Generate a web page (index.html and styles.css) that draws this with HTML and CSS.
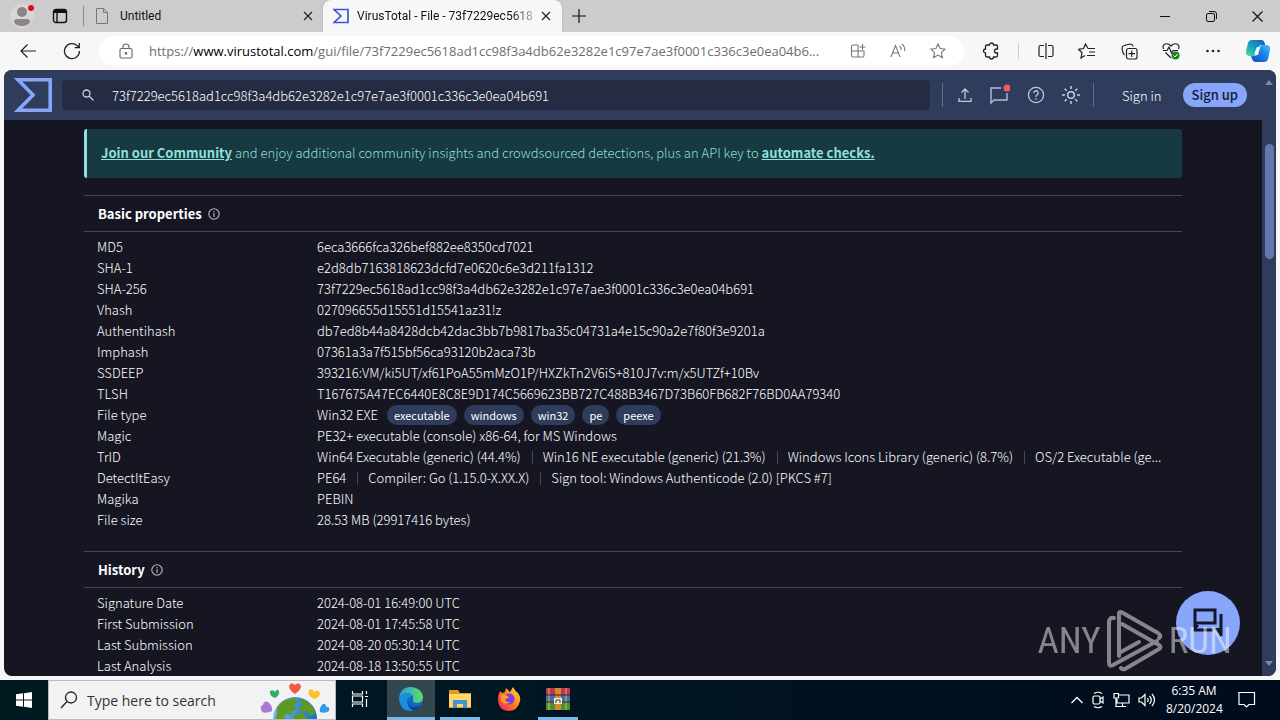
FILE: index.html
```html
<!DOCTYPE html>
<html lang="en">
<head>
<meta charset="utf-8">
<title>VirusTotal - File</title>
<link rel="stylesheet" href="styles.css">
</head>
<body>
<div class="desktop">
  <div class="tabstrip">
    <button class="plain profile" aria-label="Profile"><svg width="24" height="24" viewBox="0 0 24 24"><circle cx="12" cy="12" r="12" fill="#d8d6d5"/><circle cx="12" cy="8" r="5" fill="#8b8684"/><path d="M4 18q0-3 3-3h10q3 0 3 3-2 4-8 4t-8-4z" fill="#8b8684"/><circle cx="21" cy="4" r="3" fill="#e00b1c"/></svg></button>
    <button class="plain workspaces" aria-label="Tab actions"><svg width="16" height="16" viewBox="0 0 16 16" fill="none" stroke="#111" stroke-width="1.4"><rect x="1.5" y="1.5" width="13" height="13" rx="2.5"/><path d="M2 3.5h12" stroke-width="3"/><path d="M5 4v10"/></svg></button>
    <span class="tab-rule"></span>
    <div class="tab">
      <svg width="16" height="18" viewBox="0 0 16 18" fill="none" stroke="#777"><path d="M2.500 1.500h7l4 4v11h-11zM9.500 1.500v4h4"/></svg>
      <span class="tab-title">Untitled</span>
      <button class="plain" aria-label="Close Untitled"><svg width="10" height="10" viewBox="0 0 10 10" stroke="#222" stroke-width="1.200"><path d="M1 1l8 8M9 1l-8 8"/></svg></button>
    </div>
    <div class="tab active">
      <svg width="16" height="16" viewBox="0 0 16 16" fill="none" stroke="#3a55d9" stroke-width="1.700"><path d="M1 1.500h14v13H1L8 8z"/></svg>
      <span class="tab-title fade">VirusTotal - File - 73f7229ec5618a</span>
      <button class="plain" aria-label="Close VirusTotal"><svg width="10" height="10" viewBox="0 0 10 10" stroke="#222" stroke-width="1.200"><path d="M1 1l8 8M9 1l-8 8"/></svg></button>
    </div>
    <button class="plain new-tab" aria-label="New tab"><svg width="14" height="14" viewBox="0 0 14 14" stroke="#111" stroke-width="1.200"><path d="M7 0v14M0 7h14"/></svg></button>
    <div class="window-controls">
      <button class="plain" aria-label="Minimize"><svg width="11" height="11" viewBox="0 0 11 11" stroke="#111"><path d="M0 5.500h10"/></svg></button>
      <button class="plain" aria-label="Restore"><svg width="11" height="11" viewBox="0 0 11 11" fill="none" stroke="#111"><rect x=".5" y="2.500" width="8" height="8" rx="1.500"/><path d="M3 .5h5q2.500 0 2.500 2.500v5"/></svg></button>
      <button class="plain" aria-label="Close"><svg width="11" height="11" viewBox="0 0 11 11" stroke="#111" stroke-width="1.200"><path d="M.5.5l10 10M10.500.5l-10 10"/></svg></button>
    </div>
  </div>

  <div class="toolbar">
    <button class="plain back" aria-label="Back"><svg width="16" height="14" viewBox="0 0 16 14" fill="none" stroke="#222" stroke-width="1.200"><path d="M16 7H1M7.500.500L1 7l6.500 6.500"/></svg></button>
    <button class="plain reload" aria-label="Reload"><svg width="18" height="18" viewBox="0 0 18 18" fill="none" stroke="#222" stroke-width="1.300"><path d="M16.500 9A7.500 7.500 0 1 1 14 3.500L16 5.500M16.300 1v4.700h-4.700"/></svg></button>
    <div class="address">
      <svg width="14" height="16" viewBox="0 0 14 16" fill="none" stroke="#666" stroke-width="1.100"><rect x="1" y="5.500" width="12" height="9.500" rx="1.500"/><path d="M4 5.500V4a3 3 0 0 1 6 0v1.500"/><circle cx="7" cy="10.300" r=".8" fill="#666"/></svg>
      <div class="url">https://<b>www.virustotal.com</b>/gui/file/73f7229ec5618ad1cc98f3a4db62e3282e1c97e7ae3f0001c336c3e0ea04b6...</div>
      <button class="plain" aria-label="Add app"><svg width="16" height="16" viewBox="0 0 16 16" fill="none" stroke="#777" stroke-width="1.100"><path d="M8 2H3Q1.500 2 1.500 3.500v9Q1.500 14 3 14h9.500q1.500 0 1.500-1.500V8H1.500M8 2v12M12.500 1v6M9.500 4h6"/></svg></button>
      <button class="plain" aria-label="Read aloud"><svg width="16" height="16" viewBox="0 0 16 16" fill="none" stroke="#777" stroke-width="1.100"><path d="M1 14L5.500 2.500 10 14M2.500 10h6M9.500 3q2 1.500 1.500 4M12 1q3.500 3 2.500 7"/></svg></button>
      <button class="plain" aria-label="Favorite"><svg width="16" height="16" viewBox="0 0 16 16" fill="none" stroke="#777" stroke-width="1.100"><path d="M8 1l2.100 4.600 5 .6-3.700 3.400 1 5L8 12.100l-4.400 2.500 1-5L.9 6.200l5-.6z"/></svg></button>
    </div>
    <div class="tools">
      <button class="plain" aria-label="Extensions"><svg width="18" height="18" viewBox="0 0 18 18" fill="none" stroke="#222" stroke-width="1.300"><path d="M5 3h2.500a2 2 0 0 1 4 0H14q1.500 0 1.500 1.500V7h-1a2 2 0 0 0 0 4h1v2.500q0 1.500-1.500 1.500h-2.500a2 2 0 0 1-4 0H5q-1.500 0-1.500-1.500V11a2 2 0 0 1 0-4V4.500Q3.500 3 5 3z"/></svg></button>
      <span class="tool-rule"></span>
      <button class="plain" aria-label="Split screen"><svg width="16" height="16" viewBox="0 0 16 16" fill="none" stroke="#222" stroke-width="1.200"><path d="M6 2.500H2.500Q1 2.500 1 4v8q0 1.500 1.500 1.500H6M10 2.500h3.500Q15 2.500 15 4v8q0 1.500-1.500 1.500H10M8 0v16"/></svg></button>
      <button class="plain" aria-label="Favorites"><svg width="18" height="16" viewBox="0 0 18 16" fill="none" stroke="#222" stroke-width="1.200"><path d="M10 5.500L7.500 1 5.500 5.500l-5 .8L4 9.700 3 15l4-2.500M10 5.500h7M11 9h6M9 12.500h8"/></svg></button>
      <button class="plain" aria-label="Collections"><svg width="17" height="17" viewBox="0 0 17 17" fill="none" stroke="#222" stroke-width="1.200"><rect x="5.500" y="5.500" width="10.500" height="10.500" rx="2"/><path d="M10.700 7.500v6.500M7.500 10.700H14M3.500 12Q1.500 10 1 5.500 1 3 3 2.500l6-1.500q2.500 0 3 2.500"/></svg></button>
      <button class="plain" aria-label="Browser essentials"><svg width="18" height="18" viewBox="0 0 18 18" fill="none" stroke="#222" stroke-width="1.200"><path d="M1.500 7Q0 3.500 3 2q3.500-1 6 2 2.500-3 6-2 3 1.500 1.500 5M3.500 10.500L9 16M1 8.500h4l2-3.500 2.500 6L11 8.500h5"/><circle cx="13.500" cy="13.500" r="4" fill="#168525" stroke="none"/><path d="M11.500 13.500l1.500 1.500 2.500-3" stroke="#fff" stroke-width="1"/></svg></button>
      <button class="plain" aria-label="Settings and more"><svg width="16" height="16" viewBox="0 0 16 16" fill="#222"><circle cx="2.500" cy="8" r="1.300"/><circle cx="8" cy="8" r="1.300"/><circle cx="13.500" cy="8" r="1.300"/></svg></button>
      <button class="plain" aria-label="Copilot"><svg width="26" height="26" viewBox="0 0 26 26"><defs><linearGradient id="c1" x1="0" y1="1" x2="1" y2="0"><stop offset="0" stop-color="#4fe08d"/><stop offset=".45" stop-color="#12a5c0"/><stop offset="1" stop-color="#1557c9"/></linearGradient><linearGradient id="c2" x1="0" y1="1" x2="1" y2="0"><stop offset="0" stop-color="#1549c5"/><stop offset=".6" stop-color="#1b86ee"/><stop offset="1" stop-color="#4fc1ff"/></linearGradient></defs><path d="M7 2h9q3 0 3.700 3l.5 2h-4q-2 0-2.700 3l-2 6q-.7 2-3 2H4q-4-1-3-5l2-8q1-3 4-3z" fill="url(#c1)"/><path d="M19 24h-9q-2 0-3-3l-1-3h3q3 0 4-3l2-6q.7-2 3-2h4q4 1 3 5l-2 9q-1 3-4 3z" fill="url(#c2)"/><path d="M12 9h3l-2 8h-2q-2 0-1.500-2z" fill="#f5fbff"/></svg></button>
    </div>
  </div>

  <div class="viewport">
    <div class="site">
      <header class="site-header">
        <a class="brand" href="#" aria-label="VirusTotal"><svg width="38" height="34" viewBox="0 0 38 34" fill="none" stroke="#87a6fa" stroke-width="3.600"><path d="M4 1.800h32.200v30.400H4L19 17z"/></svg></a>
        <div class="search">
          <svg width="12" height="12" viewBox="0 0 12 12" fill="none" stroke="#ccd1df" stroke-width="1.300"><circle cx="4.500" cy="4.500" r="3.500"/><path d="M7 7l4.500 4.500"/></svg>
          <input type="text" aria-label="Search" value="73f7229ec5618ad1cc98f3a4db62e3282e1c97e7ae3f0001c336c3e0ea04b691">
        </div>
        <div class="site-actions">
          <button class="plain" aria-label="Upload"><svg width="14" height="14" viewBox="0 0 14 14" fill="none" stroke="#c0c8dd" stroke-width="1.300"><path d="M7 11V1M3.500 4.500L7 1l3.500 3.500M1 10v3.300h12V10"/></svg></button>
          <button class="plain" aria-label="Notifications"><svg width="22" height="22" viewBox="0 0 22 22" fill="none" stroke="#b4bed8" stroke-width="1.400"><path d="M13 4H3v15l3-3h13V9"/><circle cx="19" cy="4" r="3.500" fill="#f25c58" stroke="none"/></svg></button>
          <button class="plain" aria-label="Help"><svg width="18" height="18" viewBox="0 0 18 18" fill="none" stroke="#c0c8dd" stroke-width="1.300"><circle cx="9" cy="9" r="7.600"/><path d="M6.800 7a2.200 2.200 0 1 1 3.300 1.900Q9 9.500 9 11M9 12.300v1.400"/></svg></button>
          <button class="plain" aria-label="Theme"><svg width="20" height="20" viewBox="0 0 20 20" fill="none" stroke="#c8cfe0" stroke-width="1.500"><circle cx="10" cy="10" r="3.300"/><path d="M10 1v3M10 16v3M1 10h3M16 10h3M3.700 3.700l2 2M14.300 14.300l2 2M16.300 3.700l-2 2M5.700 14.300l-2 2"/></svg></button>
        </div>
        <a class="sign-in" href="#">Sign in</a>
        <a class="sign-up" href="#">Sign up</a>
      </header>
      <main class="content">
        <div class="callout"><a href="#">Join our Community</a> and enjoy additional community insights and crowdsourced detections, plus an API key to <a href="#">automate checks.</a></div>
        <section class="card">
          <h2>Basic properties <svg width="12" height="12" viewBox="0 0 12 12" fill="none" stroke="#b9bac5" stroke-width="1.100"><circle cx="6" cy="6" r="5.200"/><path d="M6 5v4M6 3v1.200"/></svg></h2>
          <table>
            <tr><th scope="row">MD5</th><td>6eca3666fca326bef882ee8350cd7021</td></tr>
            <tr><th scope="row">SHA-1</th><td>e2d8db7163818623dcfd7e0620c6e3d211fa1312</td></tr>
            <tr><th scope="row">SHA-256</th><td>73f7229ec5618ad1cc98f3a4db62e3282e1c97e7ae3f0001c336c3e0ea04b691</td></tr>
            <tr><th scope="row">Vhash</th><td>027096655d15551d15541az31!z</td></tr>
            <tr><th scope="row">Authentihash</th><td>db7ed8b44a8428dcb42dac3bb7b9817ba35c04731a4e15c90a2e7f80f3e9201a</td></tr>
            <tr><th scope="row">Imphash</th><td>07361a3a7f515bf56ca93120b2aca73b</td></tr>
            <tr><th scope="row">SSDEEP</th><td>393216:VM/ki5UT/xf61PoA55mMzO1P/HXZkTn2V6iS+810J7v:m/x5UTZf+10Bv</td></tr>
            <tr><th scope="row">TLSH</th><td>T167675A47EC6440E8C8E9D174C5669623BB727C488B3467D73B60FB682F76BD0AA79340</td></tr>
            <tr><th scope="row">File type</th><td><div class="types"><span>Win32 EXE</span><a class="chip" href="#">executable</a><a class="chip" href="#">windows</a><a class="chip" href="#">win32</a><a class="chip" href="#">pe</a><a class="chip" href="#">peexe</a></div></td></tr>
            <tr><th scope="row">Magic</th><td>PE32+ executable (console) x86-64, for MS Windows</td></tr>
            <tr><th scope="row">TrID</th><td><div class="parts"><span>Win64 Executable (generic) (44.4%)</span><span>Win16 NE executable (generic) (21.3%)</span><span>Windows Icons Library (generic) (8.7%)</span><span>OS/2 Executable (ge...</span></div></td></tr>
            <tr><th scope="row">DetectItEasy</th><td><div class="parts"><span>PE64</span><span>Compiler: Go (1.15.0-X.XX.X)</span><span>Sign tool: Windows Authenticode (2.0) [PKCS #7]</span></div></td></tr>
            <tr><th scope="row">Magika</th><td>PEBIN</td></tr>
            <tr><th scope="row">File size</th><td>28.53 MB (29917416 bytes)</td></tr>
          </table>
        </section>
        <section class="card">
          <h2>History <svg width="12" height="12" viewBox="0 0 12 12" fill="none" stroke="#b9bac5" stroke-width="1.100"><circle cx="6" cy="6" r="5.200"/><path d="M6 5v4M6 3v1.200"/></svg></h2>
          <table>
            <tr><th scope="row">Signature Date</th><td>2024-08-01 16:49:00 UTC</td></tr>
            <tr><th scope="row">First Submission</th><td>2024-08-01 17:45:58 UTC</td></tr>
            <tr><th scope="row">Last Submission</th><td>2024-08-20 05:30:14 UTC</td></tr>
            <tr><th scope="row">Last Analysis</th><td>2024-08-18 13:50:55 UTC</td></tr>
          </table>
        </section>
      </main>
    </div>
    <div class="scrollbar">
      <svg width="8" height="5" viewBox="0 0 8 5" fill="#7c89ab"><path d="M0 5l4-5 4 5z"/></svg>
      <div class="track"><div class="thumb"></div></div>
      <svg width="8" height="5" viewBox="0 0 8 5" fill="#7c89ab"><path d="M0 0l4 5 4-5z"/></svg>
    </div>
    <button class="chat" aria-label="Contact"><svg width="32" height="32" viewBox="0 0 32 32" fill="none" stroke="#15172a" stroke-width="3"><path d="M3 3h20v13H3zM3 14v9h18M29 7v22"/><path d="M3 16v7l4-4zM22 21h7v9z" fill="#15172a" stroke="none"/></svg></button>
    <div class="watermark">
      <span>ANY</span>
      <svg width="56" height="62" viewBox="0 0 56 62" fill="none" stroke="#fff" stroke-width="4" stroke-linejoin="round" stroke-linecap="round"><path d="M7 8Q2 7 2 13v40q0 4 4 2L50 31"/><path d="M12 46V3q1-2 4 0l35 20q4 3 1 5"/><path d="M15 14l37 21q3 2 0 4L18 59q-3 1-4-1"/><path d="M12 43l20-11"/></svg>
      <span>RUN</span>
    </div>
  </div>

  <footer class="taskbar">
    <button class="plain start" aria-label="Start"><svg width="16" height="16" viewBox="0 0 16 16" fill="#fff"><path d="M0 2.300L7 1.300V7.500H0zM8 1.200L16 0v7.500H8zM0 8.500h7v6.200L0 13.700zM8 8.500h8V16L8 14.800z"/></svg></button>
    <div class="task-search">
      <svg width="18" height="18" viewBox="0 0 18 18" fill="none" stroke="#222" stroke-width="1.300"><circle cx="11" cy="6.500" r="5.500"/><path d="M7 10.500L1 17"/></svg>
      <input type="text" aria-label="Taskbar search" placeholder="Type here to search">
      <svg class="globe" width="72" height="38" viewBox="0 0 72 38"><defs><linearGradient id="g1"><stop offset="0" stop-color="#79b4f5"/><stop offset="1" stop-color="#176fca"/></linearGradient></defs><circle cx="36" cy="38" r="22" fill="url(#g1)"/><path d="M18 27q6-10 18-10l3 4-4 4 3 3-5 2-1 4-5-1-3 3 4 2H16q3-5 2-9zM43 18q11 4 13 14l-4 3-6-5-3 2-3-5 4-3-3-3zM37 32l8 1 3 5H34z" fill="#5c9b20"/><path d="M36 13q-6-4-6-8 2-5 6-1 4-4 6 1 0 4-6 8z" fill="#f15b43"/><path d="M16 17q-6-2-5-7 3-2 5 1 2-4 4-1 1 4-4 7z" fill="#2fae67"/><path d="M55 18q-7-3-5-9 4-2 5 2 4-3 6 1 0 4-6 6z" fill="#ffc127"/><path d="M3 31q-3-6 1-7 1-5 5-3 5 4 4 9-5 3-10 1z" fill="#a77bd6"/><path d="M61 31q-1-5 3-8 3-1 3 3 4-1 3 4-4 3-9 1z" fill="#2b9ce8"/></svg>
    </div>
    <div class="apps">
      <button class="plain app" aria-label="Task view"><svg width="18" height="18" viewBox="0 0 18 18" fill="none" stroke="#fff" stroke-width="1.200"><path d="M1.500 1v3h10V1M1.500 17v-3h10v3M1.500 6h10v6h-10zM15.500 1v3M15.500 9v8M14 6.500h3" /></svg></button>
      <button class="plain app current" aria-label="Microsoft Edge"><svg width="26" height="26" viewBox="0 0 26 26"><defs><linearGradient id="e1"><stop offset="0" stop-color="#249fd8"/><stop offset="1" stop-color="#62dc62"/></linearGradient></defs><circle cx="13" cy="13" r="12" fill="#1168bf"/><path d="M1 13Q2 1 13 1q11 1 12 10 0 6-7 6-4-1-3-4 1-5-5-6-7 0-9 6z" fill="url(#e1)"/><path d="M1 13q2-6 8-6 4 0 6 3-6 0-6 6 1 6 8 8-14 4-16-11z" fill="#1b8fdd"/><path d="M10 15q0 6 6 6 4 0 7-2-3 5-7 6-7-3-6-10z" fill="#0b438c"/></svg></button>
      <button class="plain app open" aria-label="File Explorer"><svg width="24" height="22" viewBox="0 0 24 22"><path d="M1 2h9l2 3h11v15H1z" fill="#e49a1c"/><path d="M1 6h22v13H1z" fill="#ffd66b"/><path d="M5 20v-8h14v8h-4v-4H9v4z" fill="#3f95d6"/></svg></button>
      <button class="plain app" aria-label="Firefox"><svg width="26" height="26" viewBox="0 0 26 26"><defs><linearGradient id="f1" x1="1" y1="0" x2="0" y2="1"><stop offset="0" stop-color="#ffe13b"/><stop offset=".5" stop-color="#ff7c20"/><stop offset="1" stop-color="#ed166c"/></linearGradient></defs><path d="M4 5l2 2 3-1 1-4 4 4 3-5q2 4 5 6 3 4 2 8-2 10-12 10Q2 24 2 13q0-4 2-8z" fill="url(#f1)"/><circle cx="13" cy="13" r="5.500" fill="#7c3ce0"/><path d="M5 9q5-1 8 2-1 2-4 2 1 4 6 3-6 4-10-1z" fill="#ff9a22"/></svg></button>
      <button class="plain app open" aria-label="WinRAR"><svg width="26" height="24" viewBox="0 0 26 24"><path d="M1 1h24v7H1z" fill="#bb3556"/><path d="M1 8h24v7H1z" fill="#3e6ac3"/><path d="M1 15h24v8H1z" fill="#48913b"/><path d="M4 1v22M21 1v22" stroke="#e6b83d" stroke-width="1"/><path d="M10 1h6v22h-6z" fill="#d68a28"/><path d="M1 8h24M1 15h24" stroke="#3d241f"/><path d="M9 11h8v6H9z" fill="#f0ead6"/><path d="M11 16v-3h4v3" fill="none" stroke="#503827"/></svg></button>
    </div>
    <div class="tray">
      <button class="plain" aria-label="Hidden icons"><svg width="12" height="8" viewBox="0 0 12 8" fill="none" stroke="#fff" stroke-width="1.300"><path d="M.5 7L6 1.500 11.500 7"/></svg></button>
      <button class="plain" aria-label="Meet now"><svg width="14" height="18" viewBox="0 0 14 18" fill="none" stroke="#fff" stroke-width="1.200"><rect x="2" y="5" width="7" height="8" rx="1.500"/><path d="M9 8l3-2v6l-3-2M3 2.500q4-2.500 8 0M3 15.500q4 2.500 8 0"/></svg></button>
      <button class="plain" aria-label="Network"><svg width="17" height="16" viewBox="0 0 17 16" fill="none" stroke="#fff" stroke-width="1.200"><path d="M5.500 3H16v8H4V7M9.500 11v3.500M6 14.500h7M1 1.500h4.500V6H1zM3 6v8.500h3"/></svg></button>
      <button class="plain" aria-label="Volume"><svg width="18" height="14" viewBox="0 0 18 14" fill="none" stroke="#fff" stroke-width="1.200"><path d="M1 5h2.500L7 1.500v11L3.500 9H1zM9.500 5q1.500 2 0 4M11.500 3q3.500 4 0 8M14 1q5 6 0 12"/></svg></button>
      <div class="clock"><div>6:35 AM</div><div>8/20/2024</div></div>
      <button class="plain" aria-label="Action center"><svg width="18" height="18" viewBox="0 0 18 18" fill="none" stroke="#fff" stroke-width="1.200"><path d="M1 1.500h15.500v12H11L8.500 16 6 13.500H1z"/></svg></button>
    </div>
  </footer>
</div>
</body>
</html>
```
FILE: styles.css
```css
* { box-sizing: border-box; }
body { margin: 0; font-family: "Open Sans", "Noto Sans", sans-serif; font-size: 13px; }
svg { display: block; flex: none; }
a { color: inherit; text-decoration: none; }
.plain { display: flex; align-items: center; justify-content: center; padding: 0; border: 0; background: none; }
.desktop { display: flex; flex-direction: column; height: 100vh; min-height: 480px; overflow: hidden; background: #f7f7f7; }

.tabstrip { display: flex; align-items: center; flex: none; height: 32px; padding-left: 10px; background: #ccc; }
.profile { width: 24px; }
.workspaces { width: 16px; margin-left: 18px; }
.tab-rule { width: 1px; height: 20px; margin-left: 15px; background: #8c8c8c; }
.tab { display: flex; align-items: center; width: 239px; height: 32px; padding: 0 10px; gap: 10px; font-family: Roboto, sans-serif; font-size: 12px; color: #111; }
.tab.active { gap: 8px; padding-right: 11px; border-radius: 8px 8px 0 0; background: #f7f7f7; box-shadow: 0 0 2px #999; clip-path: inset(0 -3px 0 -3px); }
.tab-title { flex: 1; min-width: 0; white-space: nowrap; }
.tab-title.fade { mask-image: linear-gradient(to right, #000 88%, rgb(0 0 0 / .25)); }
.new-tab { margin-left: 10px; }
.window-controls { display: flex; margin-left: auto; }
.window-controls .plain { width: 46px; height: 32px; }

.toolbar { display: flex; align-items: center; flex: none; height: 38px; padding: 0 9px 0 20px; }
.reload { margin-left: 27px; }
.address { display: flex; align-items: center; flex: 1; min-width: 0; height: 30px; margin-left: 18px; padding: 0 18px 0 20px; gap: 24px; border-radius: 15px; background: #fff; }
.url { flex: 1; min-width: 0; margin: 0 -8px; overflow: hidden; text-overflow: ellipsis; white-space: nowrap; font-size: 13px; color: #6e6e6e; }
.url b { font-weight: 400; color: #000; }
.tools { display: flex; align-items: center; justify-content: space-between; width: 289px; margin-left: 18px; }
.tool-rule { width: 1px; height: 16px; margin: 0 -6px; background: #ccc; }

.viewport { position: relative; display: flex; flex: 1; min-height: 0; margin: 0 4px 4px; overflow: hidden; border-radius: 8px; background: #151622; color: #fff; font-family: "Noto Sans CJK SC", sans-serif; font-weight: 300; }
.site { display: flex; flex-direction: column; flex: 1; min-width: 0; }
.site-header { display: flex; align-items: center; flex: none; height: 50px; padding: 0 15px 0 10px; background: #2f3c5c; }
.search { display: flex; align-items: center; flex: 1; height: 30px; margin-left: 10px; padding: 0 20px; gap: 18px; border-radius: 4px; background: #242b42; }
.search input { flex: 1; min-width: 0; padding: 0; border: 0; outline: 0; background: none; color: #fff; font: inherit; }
.site-actions { display: flex; align-items: center; justify-content: space-between; width: 152px; height: 24px; margin-left: 12px; padding: 0 12px 0 15px; border: solid #5e6d91; border-width: 0 1px; }
.sign-in { margin-left: 28px; }
.sign-up { margin-left: 21px; padding: 0 9px; border-radius: 12px; background: #87a6fa; color: #151a36; font-weight: 500; line-height: 24px; }
.content { flex: 1; min-height: 0; overflow: hidden; padding: 9px 80px 0; }
.callout { height: 49px; padding-left: 14px; border-left: 3px solid #91dede; border-radius: 3px; background: #163a40; color: #91dede; line-height: 48px; }
.callout a { font-weight: 700; text-decoration: underline; }
.card { margin: 17px 0 20px; border-top: 1px solid #454653; }
.card h2 { display: flex; align-items: center; gap: 6px; height: 36px; margin: 0; padding-left: 14px; border-bottom: 1px solid #454653; font-size: 13px; font-weight: 700; }
.card table { width: 100%; margin-top: 5px; padding: 0 13px; border-spacing: 0; table-layout: fixed; }
.card tr { height: 21px; }
.card th { width: 220px; padding: 0; text-align: left; vertical-align: top; font-weight: 300; line-height: 20px; }
.card td { padding: 0; vertical-align: top; white-space: nowrap; line-height: 20px; }
.types { display: flex; align-items: center; gap: 7px; height: 20px; }
.types .chip:nth-child(2) { margin-left: 2px; }
.chip { padding: 0 7px; border-radius: 10px; background: #2f3c5c; font-size: 11px; font-weight: 400; line-height: 20px; }
.parts { display: flex; align-items: center; gap: 11px; }
.parts span { display: flex; align-items: center; gap: 10px; }
.parts span + span::before { content: ""; width: 1px; height: 13px; background: #454653; }
.scrollbar { display: flex; flex-direction: column; align-items: center; flex: none; width: 14px; padding: 10px 0; background: #2f3c5c; }
.track { flex: 1; width: 9px; }
.thumb { height: 115px; margin-top: 59px; border-radius: 5px; background: #6277ab; }
.chat { position: absolute; right: 36px; bottom: 21px; display: flex; align-items: center; justify-content: center; width: 64px; height: 64px; padding: 0; border: 0; border-radius: 50%; background: #87a6fa; }
.watermark { position: absolute; right: 44px; bottom: 4px; display: flex; align-items: center; gap: 6px; opacity: .48; font: 37px/62px "Liberation Sans Narrow", "Roboto Condensed", "DejaVu Sans Condensed", sans-serif; pointer-events: none; }

.taskbar { display: flex; flex: none; height: 40px; background: linear-gradient(to right, #001a22, #001520 50%, #000b1c); color: #fff; }
.start { width: 48px; }
.task-search { display: flex; align-items: center; width: 288px; padding: 0 4px 0 11px; gap: 9px; border: 1px solid #bbb; background: #f2f2f2; }
.task-search input { flex: 1; min-width: 0; padding: 0; border: 0; outline: 0; background: none; font: 14px "Open Sans", sans-serif; }
.task-search input::placeholder { color: #333; opacity: 1; }
.apps { display: flex; gap: 1px; }
.app { width: 48px; border-bottom: 3px solid transparent; }
.app.current { margin-left: 2px; border-color: #76b9ed; background: #33474f; }
.app.open { border-bottom: 0; padding-bottom: 3px; background: linear-gradient(#76b9ed, #76b9ed) center bottom / 40px 3px no-repeat; }
.tray { display: flex; align-items: center; gap: 8px; margin-left: auto; padding-right: 24px; }
.clock { width: 56px; margin: 0 8px 0 2px; text-align: center; font-size: 12px; line-height: 18px; white-space: nowrap; }
```
